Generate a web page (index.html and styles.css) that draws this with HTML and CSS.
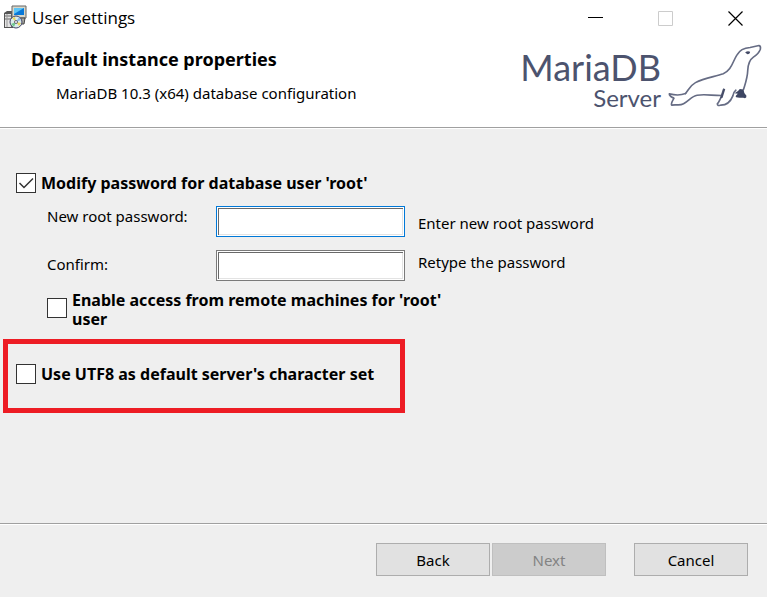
FILE: index.html
```
<!DOCTYPE html>
<html lang="en">
<head>
<meta charset="utf-8">
<title>User settings</title>
<link rel="stylesheet" href="styles.css">
</head>
<body>
<header class="header">
  <div class="titlebar">
    <svg class="app-icon" viewBox="0 0 24 24" aria-hidden="true">
      <path d="M1 8l3-2h6v17H1z" fill="#555"/>
      <path d="M2 9h6v13H2z" fill="#e4e4e4"/>
      <path d="M2 11h6M2 14h6" stroke="#666"/>
      <path d="M4 9v13" stroke="#999"/>
      <path d="M9 1h14v12H9z" fill="#d8d6c8" stroke="#666"/>
      <path d="M11 3h10v7H11z" fill="#0878d8"/>
      <path d="M11 3h10l-10 6z" fill="#5cc4f6"/>
      <path d="M14 13h8l-1 6h-5z" fill="#a8a8a0" stroke="#444"/>
      <circle cx="13" cy="17" r="6" fill="#dcecec" stroke="#446"/>
      <path d="M13 17l-4-4 3-1zM13 17l5 1-2 3z" fill="#e8d85c"/>
      <path d="M13 17l-5 2 3 3z" fill="#70c890"/>
      <path d="M13 17l3-5 2 3z" fill="#8ab8e8"/>
      <circle cx="13" cy="17" r="1.500" fill="#fff" stroke="#667"/>
    </svg>
    <span class="window-title">User settings</span>
    <div class="window-controls">
      <button type="button" aria-label="Minimize"><svg viewBox="0 0 15 15"><path d="M0 6.500h15" stroke="#000"/></svg></button>
      <button type="button" aria-label="Maximize" disabled><svg viewBox="0 0 15 15"><path d="M.5.5h14v14H.5z" fill="none" stroke="#ccc"/></svg></button>
      <button type="button" aria-label="Close"><svg viewBox="0 0 15 15"><path d="M.5.5l14 14M14.500.5l-14 14" stroke="#000" stroke-width="1.200"/></svg></button>
    </div>
  </div>
  <div class="banner">
    <div class="heading">
      <h1>Default instance properties</h1>
      <p>MariaDB 10.3 (x64) database configuration</p>
    </div>
    <div class="brand">
      <div class="brand-name"><span class="brand-main">MariaDB</span><span class="brand-sub">Server</span></div>
      <svg class="seal" viewBox="20 15 290 195" aria-hidden="true">
        <g fill="none" stroke="#666c84" stroke-width="5" stroke-linejoin="round" stroke-linecap="round">
          <path d="M76 167C88 151 91 142 106 134C133 120 165 116 190 107C215 97 218 71 231 51C239 36 253 29 271 28L298 22Q304 24 302 33C298 44 290 51 281 57C268 66 265 78 264 96C263 122 256 138 251 155"/>
          <path d="M76 167C61 173 43 172 27 168C27 177 35 178 41 181C37 189 31 197 34 202C50 199 57 205 70 198C87 189 94 175 111 172C136 168 154 173 184 173"/>
          <path d="M191 154C185 171 183 187 172 198C172 205 177 203 183 202C200 202 213 189 219 174Q220 164 228 157"/>
        </g>
        <path d="M240 153L251 155Q252 168 260 174Q261 184 250 180Q238 180 229 178Q224 176 234 168L224 166Q235 161 240 153z" fill="#3e4663"/>
        <path d="M191 152L180 183L188 180L196 154z" fill="#454c68"/>
        <path d="M256 43q8-7 15-2q0 7-8 7z" fill="#444b67"/>
      </svg>
    </div>
  </div>
</header>
<main class="settings">
  <label class="check"><input type="checkbox" checked><span>Modify password for database user 'root'</span></label>
  <div class="password-grid">
    <label class="field-label" for="pw">New root password:</label>
    <input class="field field-active" id="pw" type="password">
    <span class="hint hint-low">Enter new root password</span>
    <label class="field-label field-label-mid" for="confirm">Confirm:</label>
    <input class="field" id="confirm" type="password">
    <span class="hint">Retype the password</span>
  </div>
  <label class="check check-nested"><input type="checkbox"><span>Enable access from remote machines for 'root' user</span></label>
  <div class="highlight">
    <label class="check"><input type="checkbox"><span>Use UTF8 as default server's character set</span></label>
  </div>
</main>
<footer class="actions">
  <button type="button">Back</button>
  <button type="button" disabled>Next</button>
  <button type="button" class="cancel">Cancel</button>
</footer>
</body>
</html>
```
FILE: styles.css
```
* { box-sizing: border-box; }

body {
  margin: 0;
  min-height: 100vh;
  display: flex;
  flex-direction: column;
  background: #efefef;
  color: #000;
  font: 15px/20px "Noto Sans", "Open Sans", sans-serif;
}

button, input { font: inherit; }

.header {
  background: #fff;
  border-bottom: 1px solid #a0a0a0;
}

.titlebar {
  display: flex;
  align-items: center;
  height: 36px;
  padding: 0 16px 0 3px;
}

.app-icon { width: 24px; height: 24px; margin-bottom: 2px; }

.window-title { margin-left: 5px; font-size: 17px; line-height: 22px; font-family: "Open Sans", sans-serif; }

.window-controls { margin-left: auto; display: flex; gap: 40px; }

.window-controls button {
  display: flex;
  width: 30px;
  padding: 0 7px;
  border: 0;
  background: none;
}

.window-controls svg { width: 15px; height: 15px; flex: none; }

.banner {
  display: flex;
  justify-content: space-between;
  padding: 0 4px 19px 31px;
}

.heading { padding-top: 13px; }

h1 { margin: 0; font-size: 18px; line-height: 20px; }

.heading p { margin: 14px 0 0 25px; }

.brand { display: flex; color: #4c536e; font-family: Lato, sans-serif; }

.brand-name {
  display: flex;
  flex-direction: column;
  align-items: flex-end;
  padding-top: 10px;
}

.brand-main { font-size: 36px; line-height: 42px; }

.brand-sub { font-size: 24px; line-height: 20px; }

.seal { width: 96px; height: 65px; margin: 7px 0 0 6px; }

.settings {
  flex: 1;
  padding: 44px 3px 0;
  border-top: 1px solid #fff;
}

.check {
  display: flex;
  align-items: center;
  gap: 5px;
  margin-left: 13px;
  font-size: 16px;
  font-weight: 700;
  line-height: 19px;
}

.check input {
  appearance: none;
  flex: none;
  width: 20px;
  height: 20px;
  margin: 0;
  border: 1px solid #333;
  background: #fff;
}

.check input:checked {
  background: #fff url("data:image/svg+xml,%3Csvg xmlns='http://www.w3.org/2000/svg' viewBox='0 0 18 18'%3E%3Cpath d='M2.500 9l4.500 4.500 9-9' fill='none' stroke='%23333' stroke-width='1.500'/%3E%3C/svg%3E");
}

.password-grid {
  display: grid;
  grid-template-columns: 169px 189px 1fr;
  row-gap: 13px;
  margin: 13px 0 0 44px;
}

.field {
  width: 100%;
  height: 31px;
  padding: 2px 6px;
  border: 1px solid #7a7a7a;
  background: #fff;
  box-shadow: inset 0 0 0 1px #fff, inset 2px 2px #696969, inset -2px -2px #e3e3e3;
}

.field-active { border-color: #0078d7; }

.field-label-mid { padding-top: 4px; }

.hint { margin-left: 13px; padding-top: 2px; }

.hint-low { padding-top: 7px; }

.check-nested { max-width: 420px; margin: 10px 0 0 44px; }

.check-nested input { margin-bottom: 4px; }

.highlight {
  width: 402px;
  max-width: 100%;
  margin-top: 10px;
  padding: 20px 0 24px;
  border: 5px solid #ed1c24;
}

.highlight .check { margin-left: 8px; }

.actions {
  display: flex;
  justify-content: flex-end;
  gap: 2px;
  padding: 19px 19px 21px;
  border-top: 1px solid #a0a0a0;
  box-shadow: inset 0 1px #fff;
}

.actions button {
  width: 114px;
  height: 33px;
  padding: 0;
  border: 1px solid #adadad;
  background: #e1e1e1;
  color: #000;
}

.actions button:disabled {
  border-color: #bfbfbf;
  background: #ccc;
  color: #838383;
}

.actions .cancel { margin-left: 26px; }
```
